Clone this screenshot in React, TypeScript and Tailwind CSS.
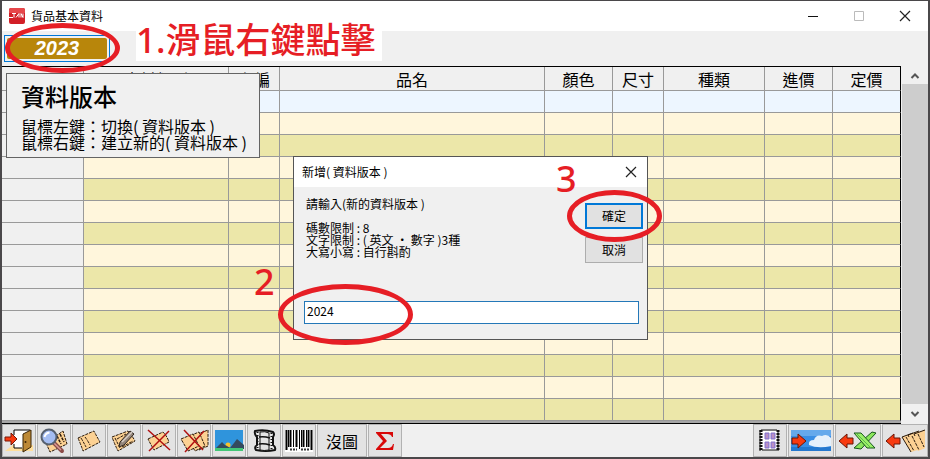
import React from 'react';

const columns = [
  { label: '', width: 'w-[82px]' },
  { label: '資料類別', width: 'w-[145px]' },
  { label: '主編', width: 'w-[51px]' },
  { label: '品名', width: 'w-auto' },
  { label: '顏色', width: 'w-[68px]' },
  { label: '尺寸', width: 'w-[51px]' },
  { label: '種類', width: 'w-[101px]' },
  { label: '進價', width: 'w-[68px]' },
  { label: '定價', width: 'w-[68px]' },
];

function rowColor(row: number) {
  if (row === 0) return 'bg-[#edf6ff]';
  return row % 2 === 1 ? 'bg-[#fff6dc]' : 'bg-[#ece7a9]';
}

function CloseIcon() {
  return (
    <svg width="12" height="12" viewBox="0 0 12 12" aria-hidden="true">
      <path d="M1 1l10 10M11 1L1 11" stroke="#222" strokeWidth="1.2" fill="none" />
    </svg>
  );
}

const iconProps = { width: 30, height: 26, viewBox: '0 0 30 26', 'aria-hidden': true } as const;

function CardShape() {
  return (
    <g strokeWidth="1" stroke="#2a1a0c" strokeLinejoin="round">
      <path d="M4 10L20 3q3 6 6 11L9 23Q7 17 4 10z" fill="#fcd193" strokeDasharray="3 1" />
      <path d="M7 10q3 5 5 9M11 9q3 4 5 8" fill="none" strokeDasharray="3 1" />
    </g>
  );
}

function ExitIcon() {
  return (
    <svg {...iconProps}>
      <path d="M1 23l8-6h20v6z" fill="#ffdf9c" />
      <path d="M10 2h14v18H10z" fill="#fff" />
      <path d="M10 7V2h16M10 16v4h8" fill="none" stroke="#000" strokeWidth="1" />
      <path d="M19 6l8-4v17l-8 5z" fill="#bd8936" stroke="#3b2405" />
      <circle cx="21.500" cy="14" r="1" fill="#3b2405" />
      <path d="M1 9h6V5l6 6-6 6v-4H1z" fill="#f83a10" stroke="#7b1605" />
    </svg>
  );
}

function SearchIcon() {
  return (
    <svg {...iconProps}>
      <path d="M7 15L24 3l4 13-17 8z" fill="#fcd193" stroke="#2a1a0c" strokeDasharray="3 1" />
      <path d="M18 8l4 8M21 6l4 8" stroke="#2a1a0c" strokeWidth="1.500" strokeDasharray="3 1" fill="none" />
      <path d="M15 15l8 8" stroke="#8b4a46" strokeWidth="4" strokeLinecap="round" />
      <path d="M15 15l7 7" stroke="#d99c96" strokeWidth="1.500" />
      <circle cx="10" cy="9" r="7.500" fill="#a4bdf2" stroke="#56606e" strokeWidth="2" />
      <path d="M5.500 9q1-4 5-4.500" stroke="#fff" strokeWidth="2" fill="none" />
    </svg>
  );
}

function CardIcon() {
  return <svg {...iconProps}><CardShape /></svg>;
}

function EditIcon() {
  return (
    <svg {...iconProps}>
      <path d="M3 9L19 3q5 6 7 10L9 23Q6 17 3 9z" fill="#fcd193" stroke="#2a1a0c" strokeDasharray="3 1" />
      <path d="M6 10l5 10M8 11l9-5M13 19l11-6" fill="none" stroke="#2a1a0c" strokeDasharray="3 1" />
      <path d="M11 14L21 3l4 3-10 11-5 2z" fill="#95877c" stroke="#30251d" />
      <path d="M13 14L23 4" stroke="#d8cec5" strokeWidth="1.500" />
    </svg>
  );
}

function DeleteIcon() {
  return (
    <svg {...iconProps}>
      <path d="M4 11L19 4q4 4 6 10L10 22Q7 17 4 11z" fill="#fcd193" stroke="#2a1a0c" strokeDasharray="3 1" />
      <path d="M4 2l22 20M25 3L5 23" stroke="#b01010" strokeWidth="1.500" fill="none" />
    </svg>
  );
}

function DeleteAllIcon() {
  return (
    <svg {...iconProps}>
      <g fill="#fcd193" stroke="#2a1a0c" strokeDasharray="3 1">
        <path d="M14 8l15-6v16l-9 4z" />
        <path d="M8 9l12-5 6 14-10 5z" />
        <path d="M2 11l12-5 6 12-11 5z" />
      </g>
      <path d="M5 2l19 20M25 3L6 24" stroke="#b01010" strokeWidth="1.500" fill="none" />
    </svg>
  );
}

function PictureIcon() {
  return (
    <svg {...iconProps}>
      <path d="M1 2h28v21H1z" fill="#2f94dc" />
      <circle cx="14" cy="17" r="2.500" fill="#f8c22c" />
      <path d="M2 20l6-6 3 3 2 1 3 2 4-5 3-4 7 6v4z" fill="#344a5e" />
      <path d="M1 20h28v3H1z" fill="#43c777" />
    </svg>
  );
}

function FilmIcon() {
  return (
    <svg {...iconProps}>
      <path d="M6 3q9-2 18 1 2 2 0 5v8q3 2 2 5-9 2-19 0-2-3 1-5V9Q5 6 6 3z" fill="#e9e9e9" stroke="#111" strokeWidth="2" />
      <path d="M11 4q5-1 9 1v17q-5 1-9 0z" fill="#e4e4e4" stroke="#111" />
      <path d="M10 9q5-1 11 1M10 16q5-1 11 1" fill="none" stroke="#111" strokeWidth="1.500" />
      <path d="M8.500 4v18M22.500 5v17" stroke="#111" strokeWidth="2" strokeDasharray="1 2" />
    </svg>
  );
}

function BarcodeIcon() {
  return (
    <svg {...iconProps}>
      <path d="M1 2h28v22H1z" fill="#fff" />
      <path d="M2.500 2v20M6.500 2v17M12.500 2v17M19.500 2v17M24.500 2v17M27.500 2v20" stroke="#000" strokeWidth="2" />
      <path d="M4.500 2v17M9.500 2v17M15.500 2v19M17.500 2v17M22.500 2v17" stroke="#000" />
      <path d="M6 21.500h7M17 21.500h8" stroke="#333" strokeWidth="2" strokeDasharray="2 1" />
    </svg>
  );
}

function SigmaIcon() {
  return (
    <svg {...iconProps}>
      <path d="M6 4h17v5h-1q-1-3-5-3h-6l6 7-7 7h8q4 0 5-4h1l-1 6H6v-1l7-8-7-8z" fill="#d80808" />
    </svg>
  );
}

function ReelIcon() {
  return (
    <svg {...iconProps}>
      <path d="M5 3h18v19H5z" fill="#fff" />
      <path d="M6 2h16M5 2v21M23 2v21M7 22h15" stroke="#111" strokeWidth="1" />
      <path d="M6 2v21M23 2v21" stroke="#111" strokeWidth="3" strokeDasharray="2 1" />
      <path d="M10 5h4v6h-4zM16 5h4v6h-4zM10 14h4v6h-4zM16 14h4v6h-4z" fill="#a08ad6" stroke="#8a74c8" />
      <path d="M12 6v4M18 15v4M12 15v4M18 6v4" stroke="#d795ae" />
    </svg>
  );
}

const wideProps = { width: 42, height: 24, viewBox: '0 0 42 24', 'aria-hidden': true } as const;

function CloudIcon() {
  return (
    <svg {...wideProps}>
      <path d="M1 1h40v21H1z" fill="#3a8ee4" />
      <path d="M1 1h40v6H1z" fill="#65a9ec" />
      <path d="M1 18h40v4H1z" fill="#2478cf" />
      <path d="M19 16q-1-5 5-5 2-6 8-4 5-3 9 2v8q-13 3-22-1z" fill="#e5f0fb" />
      <path d="M2 9h6V5l8 7-8 7v-4H2z" fill="#f83a10" stroke="#6b1505" />
    </svg>
  );
}

function ExcelIcon() {
  return (
    <svg {...wideProps}>
      <path d="M16 9h-6V5l-8 7 8 7v-4h6z" fill="#f83a10" stroke="#6b1505" />
      <path d="M35 3l4 1-15 16-7-1z" fill="#8be55c" stroke="#16581b" />
      <path d="M17 4h7l14 15h-8z" fill="#9bef68" stroke="#16581b" />
      <path d="M20 5l14 14" stroke="#57b84a" />
    </svg>
  );
}

function ImportCardsIcon() {
  return (
    <svg {...wideProps}>
      <path d="M16 9h-6V5l-8 7 8 7v-4h6z" fill="#f83a10" stroke="#6b1505" />
      <g fill="#fcd193">
        <path d="M30 5l11-4v18l-5 2z" />
        <path d="M24 6l11-4 6 17-7 3z" />
        <path d="M18 8l11-4 8 16-10 3z" />
      </g>
      <g fill="none" stroke="#2a1a0c">
        <path d="M41 1L30 5l1 2M35 2l-11 4 1 2M29 4L18 8l9 15" />
        <path d="M22 8l8 14M28 7l7 14M34 5l6 13" strokeDasharray="3 1" />
      </g>
    </svg>
  );
}

function ToolButton({ label, width = 'w-[34px]', children }: { label: string; width?: string; children: React.ReactNode }) {
  return (
    <button type="button" aria-label={label} className={`flex h-[33px] shrink-0 items-center justify-center border border-[#b2b2b2] bg-[#e3e3e3] ${width}`}>
      {children}
    </button>
  );
}

function VersionTip() {
  return (
    <div role="tooltip" className="absolute top-[73px] left-[6px] h-[85px] w-[254px] border border-[#646464] bg-[#f0f0f0] pt-1 pl-3.5 whitespace-nowrap">
      <h2 className="text-2xl leading-9 font-medium">資料版本</h2>
      <p className="mt-1 text-base leading-4">鼠標左鍵：切換( 資料版本 )</p>
      <p className="text-base leading-4">鼠標右鍵：建立新的( 資料版本 )</p>
    </div>
  );
}

function NewVersionDialog() {
  return (
    <div role="dialog" aria-labelledby="dialog-title" className="absolute top-[156px] left-[293px] h-[184px] w-[355px] border border-[#555] bg-[#f0f0f0] text-xs">
      <div className="flex h-[30px] items-center justify-between bg-white pr-2.5 pl-2">
        <h2 id="dialog-title">新增( 資料版本 )</h2>
        <button type="button" aria-label="關閉"><CloseIcon /></button>
      </div>
      <div className="flex justify-between pr-1 pl-3">
        <label htmlFor="version" className="pt-[11px] leading-3">
          請輸入(新的資料版本 )<br /><br />
          碼數限制 : 8<br />
          文字限制 : ( 英文 ・ 數字 )3種<br />
          大寫小寫 : 自行斟酌
        </label>
        <div className="flex flex-col gap-2 pt-4">
          <button type="button" className="h-[26px] w-[58px] border-2 border-[#0078d7] bg-[#e1e1e1] leading-5">確定</button>
          <button type="button" className="h-[26px] w-[58px] border border-[#adadad] bg-[#e1e1e1] leading-5">取消</button>
        </div>
      </div>
      <div className="px-2.5 pt-[38px]">
        <input id="version" defaultValue="2024" className="block h-[23px] w-[335px] border border-[#2478b8] bg-white px-0.5 pb-1 outline-none" />
      </div>
    </div>
  );
}

export default function App() {
  return (
    <div className="relative flex min-h-screen flex-col border-x-2 border-t border-b-2 border-[#4a484a] bg-[#f0f0f0] font-['Noto_Sans_CJK_TC',sans-serif] text-black">
      <header className="flex h-[30px] items-center bg-white pl-[7px]">
        <svg width="16" height="16" viewBox="0 0 16 16" aria-hidden="true">
          <rect width="16" height="16" rx="2" fill="#d21f27" />
          <path d="M0 2q0-2 2-2h12q2 0 2 2v3H0z" fill="#e6464a" />
          <path d="M0 9.500h4M3 5.500h4M5 5.500v4M7 9.500l3-4v4M12 9.500v-4l2 4v-4" stroke="#fff" fill="none" />
        </svg>
        <h1 className="ml-1.5 flex-1 text-xs">貨品基本資料</h1>
        <div className="flex items-center gap-[34px] pr-[17px]">
          <button type="button" aria-label="最小化"><svg width="12" height="12" viewBox="0 0 12 12"><path d="M1 6.500h10" stroke="#111" /></svg></button>
          <button type="button" aria-label="最大化"><svg width="12" height="12" viewBox="0 0 12 12"><path d="M1.500 1.500h9v9h-9z" fill="none" stroke="#bbb" /></svg></button>
          <button type="button" aria-label="關閉"><CloseIcon /></button>
        </div>
      </header>

      <div className="flex h-[35px] items-start px-0.5 pt-1">
        <button type="button" className="h-[27px] w-[106px] border border-[#0078d7] bg-[#f0f0f0] p-0.5">
          <span className="block h-[21px] rounded-xs bg-[#b8860b] font-['Liberation_Sans',sans-serif] text-xl leading-[21px] font-bold text-white italic">2023</span>
        </button>
      </div>

      <main className="flex">
        <div className="flex-1 border-t border-b border-black">
          <table className="w-full table-fixed border-separate border-spacing-0 border-b-2 border-[#a6a6a6]">
            <thead>
              <tr className="h-6">
                {columns.map((c, i) => (
                  <th key={i} className={`border-r border-b border-[#999] p-0 text-base leading-5 font-normal last:border-r-black ${c.width}`}>{c.label}</th>
                ))}
              </tr>
            </thead>
            <tbody>
              {Array.from({ length: 15 }, (_, row) => (
                <tr key={row} className={`h-[22px] ${rowColor(row)}`}>
                  {columns.map((_, i) => (
                    <td key={i} className="border-r border-b border-[#999] p-0 first:bg-[#f0f0f0] last:border-r-black" />
                  ))}
                </tr>
              ))}
            </tbody>
          </table>
        </div>
        <div className="flex w-[27px] flex-col pt-0.5 pl-px">
          <button type="button" aria-label="向上捲動" className="flex h-4 items-center justify-center">
            <svg width="10" height="8" viewBox="0 0 10 8"><path d="M1.500 6L5 2.500 8.500 6" fill="none" stroke="#555" strokeWidth="2" /></svg>
          </button>
          <div className="flex-1 bg-[#cdcdcd]" />
          <button type="button" aria-label="向下捲動" className="flex h-5 items-center justify-center">
            <svg width="10" height="8" viewBox="0 0 10 8"><path d="M1.500 2L5 5.500 8.500 2" fill="none" stroke="#555" strokeWidth="2" /></svg>
          </button>
        </div>
      </main>

      <footer className="flex gap-px">
        <ToolButton label="離開"><ExitIcon /></ToolButton>
        <ToolButton label="搜尋"><SearchIcon /></ToolButton>
        <ToolButton label="新增"><CardIcon /></ToolButton>
        <ToolButton label="編輯"><EditIcon /></ToolButton>
        <ToolButton label="刪除"><DeleteIcon /></ToolButton>
        <ToolButton label="全部刪除"><DeleteAllIcon /></ToolButton>
        <ToolButton label="圖片"><PictureIcon /></ToolButton>
        <ToolButton label="影片"><FilmIcon /></ToolButton>
        <ToolButton label="條碼"><BarcodeIcon /></ToolButton>
        <ToolButton label="沒圖" width="w-[50px]">沒圖</ToolButton>
        <ToolButton label="合計"><SigmaIcon /></ToolButton>
        <div className="flex-1" />
        <ToolButton label="膠卷"><ReelIcon /></ToolButton>
        <ToolButton label="上傳雲端" width="w-[46px]"><CloudIcon /></ToolButton>
        <ToolButton label="匯入 Excel" width="w-[46px]"><ExcelIcon /></ToolButton>
        <ToolButton label="匯入資料" width="w-[46px]"><ImportCardsIcon /></ToolButton>
      </footer>

      <div className="absolute inset-0 -top-px -left-0.5">
        <VersionTip />
        <NewVersionDialog />
        <div className="pointer-events-none font-['Noto_Sans','Noto_Sans_CJK_TC',sans-serif] text-4xl leading-10 font-medium text-[#e61e25]">
          <p className="absolute top-[18px] left-[136px] h-[43px] w-[246px] bg-white text-[35px] leading-[43px] whitespace-nowrap">1.滑鼠右鍵點擊</p>
          <p className="absolute top-[262px] left-[254px]">2</p>
          <p className="absolute top-[159px] left-[556px]">3</p>
          <div className="absolute top-[23px] left-[5px] h-[50px] w-[115px] rounded-[50%] border-5 border-[#e61e25]" />
          <div className="absolute top-[284px] left-[278px] h-[61px] w-[135px] rounded-[50%] border-5 border-[#e61e25]" />
          <div className="absolute top-[190px] left-[567px] h-[52px] w-[95px] rounded-[50%] border-5 border-[#e61e25]" />
        </div>
      </div>
    </div>
  );
}
